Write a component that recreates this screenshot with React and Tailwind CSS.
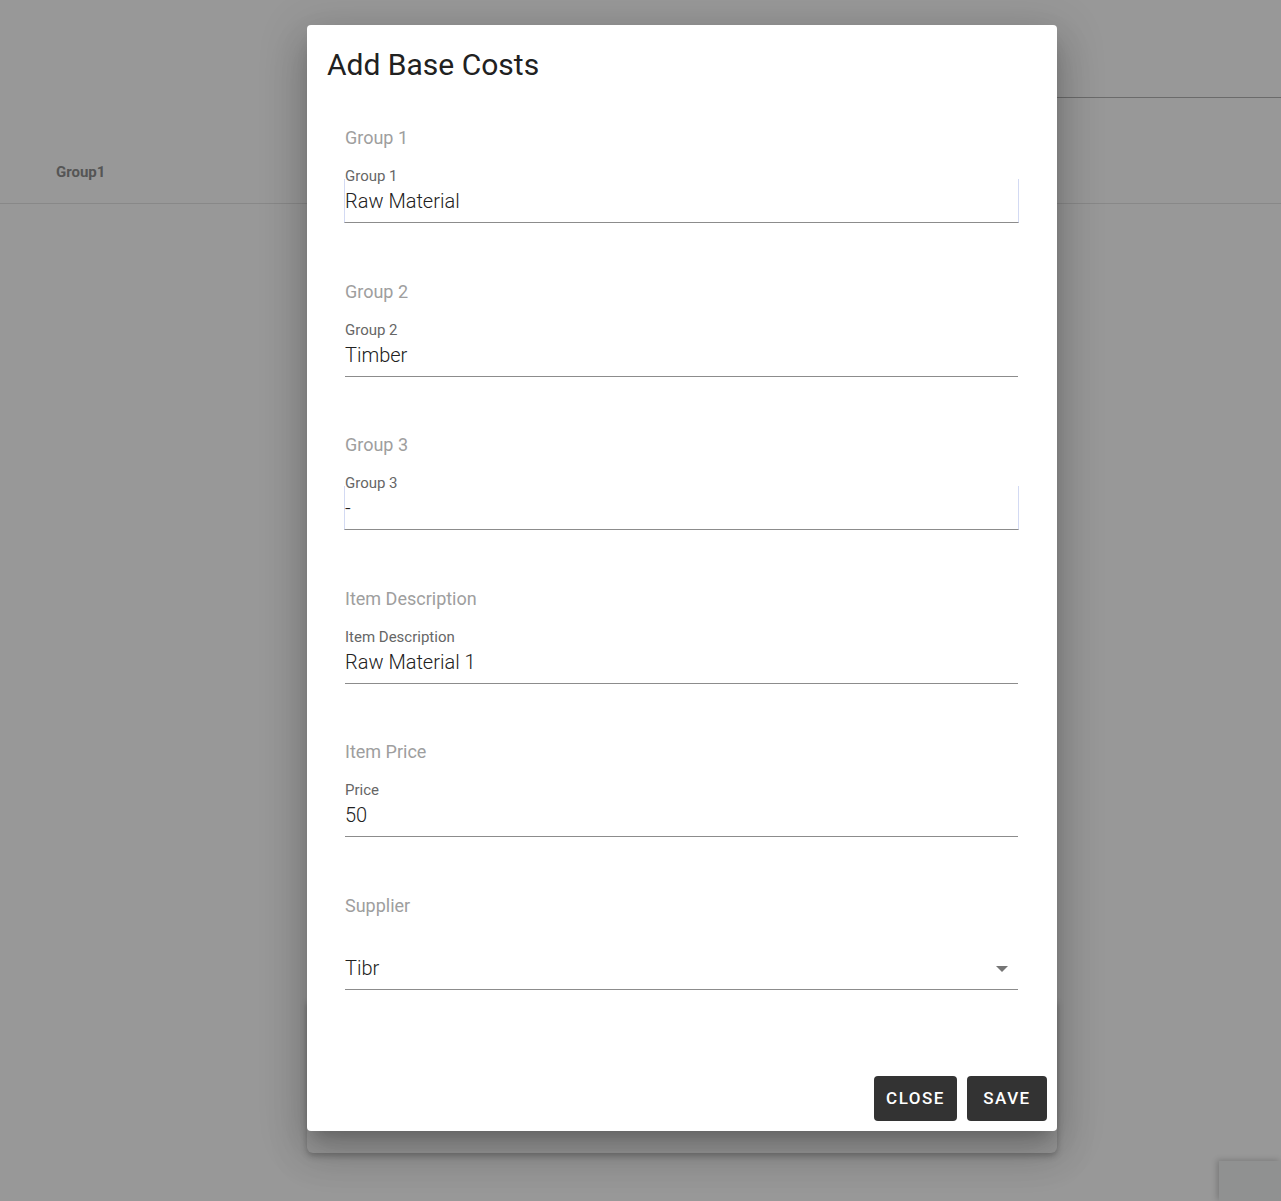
import React from 'react';

const fields = [
  { section: 'Group 1', label: 'Group 1', value: 'Raw Material', bordered: true },
  { section: 'Group 2', label: 'Group 2', value: 'Timber' },
  { section: 'Group 3', label: 'Group 3', value: '-', bordered: true },
  { section: 'Item Description', label: 'Item Description', value: 'Raw Material 1' },
  { section: 'Item Price', label: 'Price', value: '50' },
];

const TextField = ({ section, label, value, bordered }) => (
  <div>
    <p className="text-[18px] leading-[24px] text-[#9e9e9e]">{section}</p>
    <p className="mt-[23px] text-[15px] leading-[6px] text-[#666666]">{label}</p>
    <div
      className={`pt-[10px] pb-[9px] border-b border-[#8c8c8c] ${
        bordered ? '-mx-[1px] px-[1px] border-x border-x-[#d3daf3]' : ''
      }`}
    >
      <p className={`text-[20px] leading-[24px] font-light text-[#212121] ${bordered ? '-ml-[1px]' : ''}`}>
        {value}
      </p>
    </div>
  </div>
);

const SelectField = ({ section, value }) => (
  <div>
    <p className="text-[18px] leading-[24px] text-[#9e9e9e]">{section}</p>
    <div className="mt-[38.5px] pb-[9px] border-b border-[#8c8c8c] flex items-center justify-between">
      <p className="text-[20px] leading-[24px] font-light text-[#212121]">{value}</p>
      <svg width="14" height="8" viewBox="0 0 14 8" className="mr-[9px] mt-[1px]">
        <polygon points="1,1 13,1 7,7" fill="#757575" />
      </svg>
    </div>
  </div>
);

export default function App() {
  return (
    <div className="relative w-full h-[1201px] overflow-hidden bg-[#989898] font-['Roboto',sans-serif]">
      {/* page behind the backdrop */}
      <div className="h-[98px] flex">
        <div className="w-[700px]" />
        <div className="flex-1 border-b border-[#6b6b6b]" />
      </div>
      <div className="h-[106px] border-b border-[#888888] pl-[56px] pt-[64px]">
        <p className="text-[15px] leading-[20px] font-bold text-[#555555]">Group1</p>
      </div>

      {/* card under the dialog */}
      <div className="absolute left-[307px] top-[1000px] w-[750px] h-[153px] rounded-b-[6px] bg-[#9a9a9a] shadow-[0_3px_6px_rgba(0,0,0,0.25)]" />

      {/* corner panel */}
      <div className="absolute left-[1219px] top-[1161px] w-[62px] h-[40px] bg-[#909191] shadow-[-2px_-1px_6px_rgba(0,0,0,0.2)]" />

      {/* dialog */}
      <div className="absolute left-[307px] top-[25px] w-[750px] h-[1106px] bg-white rounded-[4px] flex flex-col shadow-[0px_11px_15px_-7px_rgba(0,0,0,0.2),0px_24px_38px_3px_rgba(0,0,0,0.14),0px_9px_46px_8px_rgba(0,0,0,0.12)]">
        <h2 className="pt-[22px] pl-5 text-[30px] leading-[36px] text-[#212121]">Add Base Costs</h2>
        <div className="mt-[43px] pl-[38px] pr-[39px] flex flex-col gap-[56.5px]">
          {fields.map((f) => (
            <TextField key={f.section} {...f} />
          ))}
          <SelectField section="Supplier" value="Tibr" />
        </div>
        <div className="flex-1" />
        <div className="flex justify-end gap-[10px] pr-[10px] pb-[10px]">
          <button className="h-[45px] w-[83px] rounded-[4px] bg-[#333333] text-white text-[17px] font-medium tracking-[1.5px]">
            CLOSE
          </button>
          <button className="h-[45px] w-[80px] rounded-[4px] bg-[#333333] text-white text-[17px] font-medium tracking-[1.5px]">
            SAVE
          </button>
        </div>
      </div>
    </div>
  );
}
